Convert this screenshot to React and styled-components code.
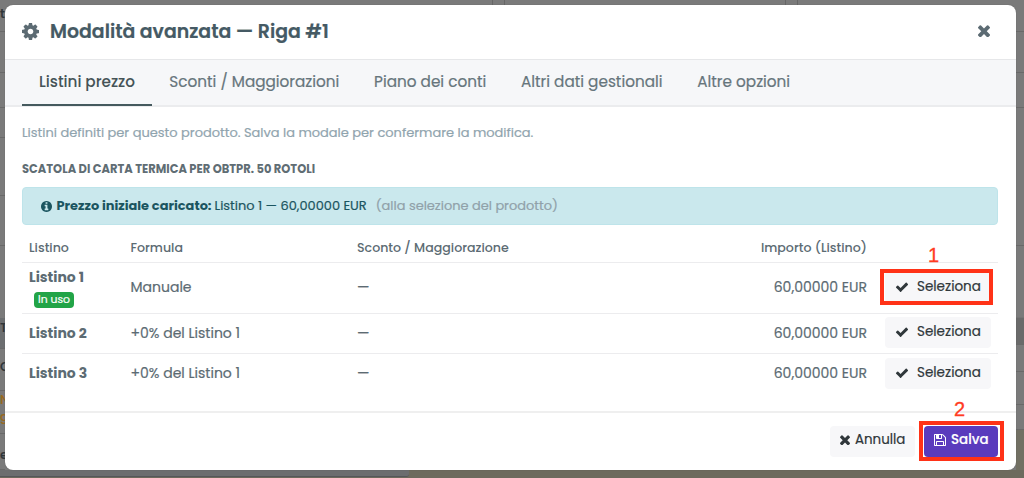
import { useState } from "react";
import styled, { createGlobalStyle, css } from "styled-components";

const GlobalStyle = createGlobalStyle`
  * {
    box-sizing: border-box;
  }

  body {
    margin: 0;
    overflow: hidden;
    font-family: Poppins, Inter, "Open Sans", sans-serif;
    color: #5c6b73;
    -webkit-text-stroke: 0.2px;
  }

  button {
    font-family: inherit;
    border: none;
    padding: 0;
    cursor: pointer;
  }
`;

const Page = styled.div`
  position: relative;
  width: 1024px;
  height: 478px;
  overflow: hidden;
  background-color: #7a7a7a;
`;

/* page behind the modal */
const Behind = styled.div`
  display: flex;
  justify-content: space-between;
  height: 470px;
`;

const Rail = styled.div`
  width: ${(p) => p.$width}px;
  overflow: hidden;
`;

const RailCell = styled.div`
  height: ${(p) => p.$height}px;
  overflow: hidden;
  white-space: pre-line;
  font-size: 13px;
  font-weight: 500;
  line-height: ${(p) => p.$line || p.$height}px;
  color: ${(p) => p.$color || "#2f3539"};
  background-color: ${(p) => p.$bg || "transparent"};
  border-bottom: 1px solid ${(p) => p.$border || "#696969"};
`;

const TopCells = styled.div`
  display: flex;
  flex: 1;
  height: 5px;
`;

const TopCell = styled.div`
  width: ${(p) => p.$width}px;
  border-right: 1px solid #666666;
`;

const BottomStrip = styled.div`
  display: flex;
  height: 8px;
  background-color: #6d6a5d;
`;

const BottomGrey = styled.div`
  width: 409px;
  height: 7px;
  background-color: #6c6d6f;
  border-bottom: 1px solid #55575a;
  border-radius: 0 0 3px 0;
`;

const Modal = styled.div`
  position: absolute;
  top: 5px;
  left: 5px;
  width: 1011px;
  height: 465px;
  display: flex;
  flex-direction: column;
  background-color: white;
  border-radius: 8px;
  box-shadow: 0 0 1px 0 #555555;
`;

const ModalHeader = styled.div`
  display: flex;
  align-items: center;
  height: 55px;
  padding: 0 26px 2px 17px;
  border-bottom: 1px solid #e6e7e9;
`;

const ModalTitle = styled.h4`
  flex: 1;
  margin: 1px 0 0 11px;
  font-size: 18.9px;
  font-weight: 600;
  line-height: 24px;
  color: #455a64;
`;

const CloseBtn = styled.button`
  display: flex;
  background: none;
  color: #5c6b73;
`;

const Tabs = styled.div`
  display: flex;
  height: 47px;
  padding-left: 17px;
  background-color: #f6f7f9;
  border-bottom: 2px solid #ebecee;
`;

const Tab = styled.button`
  height: 46px;
  padding: 0 17.4px 2px;
  background: none;
  font-size: 15.25px;
  font-weight: 400;
  color: #66757c;
  border-bottom: 2px solid transparent;
  white-space: nowrap;
  ${(p) =>
    p.$active &&
    css`
      padding: 0 17px 2px;
      font-weight: 500;
      letter-spacing: -0.02px;
      color: #455357;
      border-bottom-color: #455a5e;
      -webkit-text-stroke: 0;
    `}
`;

const ModalBody = styled.div`
  flex: 1;
  padding: 16px 18px 0 17px;
`;

const Hint = styled.p`
  margin: 0;
  font-size: 12.97px;
  line-height: 20px;
  color: #90a4ae;
`;

const ProductName = styled.h6`
  margin: 17px 0 0;
  font-size: 11.5px;
  font-weight: 700;
  line-height: 18px;
  color: #5f6d74;
  text-transform: uppercase;
  -webkit-text-stroke: 0;
`;

const Alert = styled.div`
  display: flex;
  align-items: center;
  height: 38px;
  margin-top: 9px;
  padding: 0 18px;
  font-size: 12.95px;
  color: #1b5560;
  background-color: #cae8ed;
  border: 1px solid #bee4ea;
  border-radius: 4px;
`;

const AlertStrong = styled.strong`
  margin-left: 4.5px;
  -webkit-text-stroke: 0;
`;

const AlertValue = styled.span`
  margin-left: 3px;
`;

const AlertNote = styled.span`
  margin-left: 9px;
  color: #90a1a9;
`;

const Row = styled.div`
  display: grid;
  grid-template-columns: 101.5px 226.5px 1fr 150px 124px;
  align-items: center;
  height: ${(p) => p.$height}px;
  padding: ${(p) => (p.$head ? "8px" : "0")} 7px ${(p) => (p.$head ? 0 : 2)}px;
  border-bottom: ${(p) => (p.$last ? "none" : "1px solid #ececee")};
`;

const HeadCell = styled.div`
  font-size: 12.6px;
  font-weight: 500;
  line-height: 18px;
  text-align: ${(p) => (p.$right ? "right" : "left")};
  -webkit-text-stroke: 0;
`;

const Cell = styled.div`
  font-size: 14px;
  line-height: 20px;
  text-align: ${(p) => (p.$right ? "right" : "left")};
`;

const ListName = styled.div`
  font-size: 14px;
  font-weight: 700;
  line-height: 20px;
  -webkit-text-stroke: 0;
`;

const Badge = styled.span`
  display: block;
  width: 40px;
  height: 16px;
  margin: 5px 0 0 5px;
  font-size: 10.8px;
  line-height: 15px;
  text-align: center;
  color: white;
  background-color: #22a447;
  border-radius: 4px;
`;

const SelectCell = styled.div`
  position: relative;
  display: flex;
  justify-content: flex-end;
`;

const SelectBtn = styled.button`
  display: flex;
  align-items: center;
  width: 106px;
  height: 31px;
  padding: 0 0 1px 10px;
  gap: 8px;
  font-size: 13.5px;
  font-weight: 400;
  color: #30373b;
  background-color: #f7f7f9;
  border-radius: 4px;
`;

const ModalFooter = styled.div`
  display: flex;
  justify-content: flex-end;
  gap: 9px;
  height: 59px;
  padding: 13px 18px 0 0;
  border-top: 2px solid #efefef;
`;

const FooterBtn = styled.button`
  display: flex;
  align-items: center;
  gap: 5px;
  width: ${(p) => (p.$primary ? 74 : 85)}px;
  height: 31px;
  padding: 0 0 3px 10px;
  font-size: 13.4px;
  font-weight: ${(p) => (p.$primary ? 500 : 400)};
  color: ${(p) => (p.$primary ? "white" : "#30373b")};
  background-color: ${(p) => (p.$primary ? "#5a3bbd" : "#f7f7f9")};
  border-radius: 4px;
`;

const SaveWrapper = styled.div`
  position: relative;
`;

/* numbered highlight drawn over a button */
const Mark = styled.div`
  position: absolute;
  top: ${(p) => p.$top}px;
  left: ${(p) => p.$left}px;
  width: ${(p) => p.$width}px;
  height: ${(p) => p.$height}px;
  border: 4px solid #ff3217;
  pointer-events: none;
`;

const MarkNumber = styled.span`
  position: absolute;
  top: ${(p) => p.$top}px;
  left: ${(p) => p.$left}px;
  font-family: "Liberation Sans", Arial, sans-serif;
  font-size: 20px;
  line-height: 20px;
  color: #ff3b22;
  -webkit-text-stroke: 0.3px #ff3b22;
`;

const Svg = styled.svg`
  flex-shrink: 0;
  fill: currentColor;
`;

const paths = {
  cog: "M1152 896q0-106-75-181t-181-75-181 75-75 181 75 181 181 75 181-75 75-181zm512-109v222q0 12-8 23t-20 13l-185 28q-19 54-39 91 35 50 107 138 10 12 10 25t-9 23q-27 37-99 108t-94 71q-12 0-26-9l-138-108q-44 23-91 38-16 136-29 186-7 28-36 28h-222q-14 0-24.5-8.5t-11.5-21.5l-28-184q-49-16-90-37l-141 107q-10 9-25 9-14 0-25-11-126-114-165-168-7-10-7-23 0-12 8-23 15-21 51-66.5t54-70.5q-27-50-41-99l-183-27q-13-2-21-12.5t-8-23.5v-222q0-12 8-23t19-13l186-28q14-46 39-92-40-57-107-138-10-12-10-24 0-10 9-23 26-36 98.5-107.5t94.5-71.5q13 0 26 10l138 107q44-23 91-38 16-136 29-186 7-28 36-28h222q14 0 24.5 8.5t11.5 21.5l28 184q49 16 90 37l142-107q9-9 24-9 13 0 25 10 129 119 165 170 7 8 7 22 0 12-8 23-15 21-51 66.5t-54 70.5q26 50 41 98l183 28q13 2 21 12.5t8 23.5z",
  times:
    "M1490 1322q0 40-28 68l-136 136q-28 28-68 28t-68-28l-294-294-294 294q-28 28-68 28t-68-28l-136-136q-28-28-28-68t28-68l294-294-294-294q-28-28-28-68t28-68l136-136q28-28 68-28t68 28l294 294 294-294q28-28 68-28t68 28l136 136q28 28 28 68t-28 68l-294 294 294 294q28 28 28 68z",
  check:
    "M1671 566q0 40-28 68l-724 724-136 136q-28 28-68 28t-68-28l-136-136-362-362q-28-28-28-68t28-68l136-136q28-28 68-28t68 28l294 295 656-657q28-28 68-28t68 28l136 136q28 28 28 68z",
  info: "M1152 1376v-160q0-14-9-23t-23-9h-96v-512q0-14-9-23t-23-9h-320q-14 0-23 9t-9 23v160q0 14 9 23t23 9h96v320h-96q-14 0-23 9t-9 23v160q0 14 9 23t23 9h448q14 0 23-9t9-23zm-128-896v-160q0-14-9-23t-23-9h-192q-14 0-23 9t-9 23v160q0 14 9 23t23 9h192q14 0 23-9t9-23zm640 416q0 209-103 385.5t-279.5 279.5-385.5 103-385.5-103-279.5-279.5-103-385.5 103-385.5 279.5-279.5 385.5-103 385.5 103 279.5 279.5 103 385.5z",
  save: "M512 1536h768v-384h-768v384zm896 0h128v-896q0-14-10-38.5t-20-34.5l-281-281q-10-10-34-20t-39-10v416q0 40-28 68t-68 28h-576q-40 0-68-28t-28-68v-416h-128v1280h128v-416q0-40 28-68t68-28h832q40 0 68 28t28 68v416zm-384-928v-320q0-13-9.5-22.5t-22.5-9.5h-192q-13 0-22.5 9.5t-9.5 22.5v320q0 13 9.5 22.5t22.5 9.5h192q13 0 22.5-9.5t9.5-22.5zm640 32v928q0 40-28 68t-68 28h-1344q-40 0-68-28t-28-68v-1344q0-40 28-68t68-28h928q40 0 88 20t76 48l280 280q28 28 48 76t20 88z",
};

const Icon = ({ name, size, viewBox = "0 0 1792 1792" }) => (
  <Svg width={size} height={size} viewBox={viewBox} aria-hidden="true">
    <path d={paths[name]} />
  </Svg>
);

const tabs = [
  "Listini prezzo",
  "Sconti / Maggiorazioni",
  "Piano dei conti",
  "Altri dati gestionali",
  "Altre opzioni",
];

const lists = [
  { name: "Listino 1", formula: "Manuale", height: 51, inUse: true },
  { name: "Listino 2", formula: "+0% del Listino 1", height: 40 },
  { name: "Listino 3", formula: "+0% del Listino 1", height: 40 },
];

const leftRail = [
  { height: 32, text: "t", line: 28 },
  { height: 41 },
  { height: 35 },
  { height: 30 },
  { height: 58 },
  { height: 50 },
  { height: 72, border: "#7a7a7a" },
  { height: 31, text: "T", bg: "#6c6e70", line: 20 },
  { height: 42, text: "C", line: 36 },
  { height: 43, text: "N\ng", line: 17, color: "#9a6a1e" },
  { height: 36, text: "e", line: 42 },
];

const rightRail = [
  { height: 32 },
  { height: 41 },
  { height: 35 },
  { height: 138 },
  { height: 72, border: "#747474" },
  { height: 27, bg: "#6a6a6a" },
  { height: 27 },
  { height: 33 },
  { height: 25 },
  { height: 40, bg: "#727063", border: "#727063" },
];

const App = () => {
  const [active, setActive] = useState("Listini prezzo");

  return (
    <Page>
      <GlobalStyle />
      <Behind>
        <Rail $width={5}>
          {leftRail.map((c, i) => (
            <RailCell
              key={i}
              $height={c.height}
              $line={c.line}
              $color={c.color}
              $bg={c.bg}
              $border={c.border}
            >
              {c.text}
            </RailCell>
          ))}
        </Rail>
        <TopCells>
          <TopCell $width={488} />
          <TopCell $width={12} />
          <TopCell $width={281} />
          <TopCell $width={12} />
        </TopCells>
        <Rail $width={8}>
          {rightRail.map((c, i) => (
            <RailCell key={i} $height={c.height} $bg={c.bg} $border={c.border} />
          ))}
        </Rail>
      </Behind>
      <BottomStrip>
        <BottomGrey />
      </BottomStrip>

      <Modal role="dialog">
        <ModalHeader>
          <Icon name="cog" size={17} viewBox="128 128 1536 1536" />
          <ModalTitle>Modalità avanzata — Riga #1</ModalTitle>
          <CloseBtn aria-label="Chiudi">
            <Icon name="times" size={12} viewBox="302 334 1188 1188" />
          </CloseBtn>
        </ModalHeader>

        <Tabs>
          {tabs.map((t) => (
            <Tab key={t} $active={t === active} onClick={() => setActive(t)}>
              {t}
            </Tab>
          ))}
        </Tabs>

        <ModalBody>
          <Hint>
            Listini definiti per questo prodotto. Salva la modale per confermare
            la modifica.
          </Hint>
          <ProductName>Scatola di carta termica per OBTPR. 50 rotoli</ProductName>
          <Alert>
            <Icon name="info" size={11} viewBox="128 128 1536 1536" />
            <AlertStrong>Prezzo iniziale caricato:</AlertStrong>
            <AlertValue>Listino 1 — 60,00000 EUR</AlertValue>
            <AlertNote>(alla selezione del prodotto)</AlertNote>
          </Alert>

          <Row $height={38} $head>
            <HeadCell>Listino</HeadCell>
            <HeadCell>Formula</HeadCell>
            <HeadCell>Sconto / Maggiorazione</HeadCell>
            <HeadCell $right>Importo (Listino)</HeadCell>
          </Row>
          {lists.map((l, i) => (
            <Row key={l.name} $height={l.height} $last={i === lists.length - 1}>
              <div>
                <ListName>{l.name}</ListName>
                {l.inUse && <Badge>In uso</Badge>}
              </div>
              <Cell>{l.formula}</Cell>
              <Cell>—</Cell>
              <Cell $right>60,00000 EUR</Cell>
              <SelectCell>
                <SelectBtn>
                  <Icon name="check" size={14} />
                  Seleziona
                </SelectBtn>
                {l.inUse && (
                  <>
                    <Mark $top={-3} $left={13} $width={113} $height={36} />
                    <MarkNumber $top={-27} $left={61}>
                      1
                    </MarkNumber>
                  </>
                )}
              </SelectCell>
            </Row>
          ))}
        </ModalBody>

        <ModalFooter>
          <FooterBtn>
            <Icon name="times" size={10} viewBox="302 334 1188 1188" />
            Annulla
          </FooterBtn>
          <SaveWrapper>
            <FooterBtn $primary>
              <Icon name="save" size={12} viewBox="128 128 1536 1536" />
              Salva
            </FooterBtn>
            <Mark $top={-5} $left={-5} $width={85} $height={40} />
            <MarkNumber $top={-27} $left={30}>
              2
            </MarkNumber>
          </SaveWrapper>
        </ModalFooter>
      </Modal>
    </Page>
  );
};

export default App;
